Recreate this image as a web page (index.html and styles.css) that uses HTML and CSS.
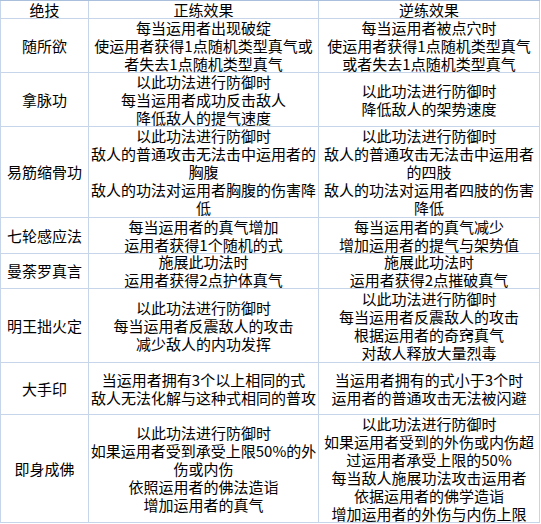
FILE: index.html
```html
<!DOCTYPE html>
<html lang="zh">
<head>
<meta charset="utf-8">
<title>绝技</title>
<link rel="stylesheet" href="styles.css">
</head>
<body>
<div class="table">
  <div class="cell head">绝技</div>
  <div class="cell head">正练效果</div>
  <div class="cell head">逆练效果</div>

  <div class="cell name">随所欲</div>
  <div class="cell">每当运用者出现破绽<br>使运用者获得1点随机类型真气或<br>者失去1点随机类型真气</div>
  <div class="cell">每当运用者被点穴时<br>使运用者获得1点随机类型真气<br>或者失去1点随机类型真气</div>

  <div class="cell name">拿脉功</div>
  <div class="cell">以此功法进行防御时<br>每当运用者成功反击敌人<br>降低敌人的提气速度</div>
  <div class="cell">以此功法进行防御时<br>降低敌人的架势速度</div>

  <div class="cell name">易筋缩骨功</div>
  <div class="cell">以此功法进行防御时<br>敌人的普通攻击无法击中运用者的<br>胸腹<br>敌人的功法对运用者胸腹的伤害降<br>低</div>
  <div class="cell">以此功法进行防御时<br>敌人的普通攻击无法击中运用者<br>的四肢<br>敌人的功法对运用者四肢的伤害<br>降低</div>

  <div class="cell name">七轮感应法</div>
  <div class="cell">每当运用者的真气增加<br>运用者获得1个随机的式</div>
  <div class="cell">每当运用者的真气减少<br>增加运用者的提气与架势值</div>

  <div class="cell name">曼荼罗真言</div>
  <div class="cell">施展此功法时<br>运用者获得2点护体真气</div>
  <div class="cell">施展此功法时<br>运用者获得2点摧破真气</div>

  <div class="cell name">明王拙火定</div>
  <div class="cell">以此功法进行防御时<br>每当运用者反震敌人的攻击<br>减少敌人的内功发挥</div>
  <div class="cell">以此功法进行防御时<br>每当运用者反震敌人的攻击<br>根据运用者的奇窍真气<br>对敌人释放大量烈毒</div>

  <div class="cell name">大手印</div>
  <div class="cell">当运用者拥有3个以上相同的式<br>敌人无法化解与这种式相同的普攻</div>
  <div class="cell">当运用者拥有的式小于3个时<br>运用者的普通攻击无法被闪避</div>

  <div class="cell name">即身成佛</div>
  <div class="cell">以此功法进行防御时<br>如果运用者受到承受上限50%的外<br>伤或内伤<br>依照运用者的佛法造诣<br>增加运用者的真气</div>
  <div class="cell">以此功法进行防御时<br>如果运用者受到的外伤或内伤超<br>过运用者承受上限的50%<br>每当敌人施展功法攻击运用者<br>依据运用者的佛学造诣<br>增加运用者的外伤与内伤上限</div>
</div>
</body>
</html>
```

FILE: styles.css
```css
html, body {
  margin: 0;
  padding: 0;
  background: #ffffff;
}

.table {
  display: grid;
  grid-template-columns: 87px 229px 220px;
  grid-template-rows: 17px 53px 53px 90px 35px 34px 73px 51px 107px;
  gap: 1px;
  padding: 0 1px 1px 1px;
  border-top: 1px solid #aabfdc;
  width: 538px;
  background: #c7d5ea;
  font-family: "Noto Sans CJK SC", "Noto Sans", sans-serif;
  font-size: 15px;
  line-height: 18px;
  color: #000000;
}

.cell {
  background: #ffffff;
  display: flex;
  align-items: center;
  justify-content: center;
  text-align: center;
  white-space: nowrap;
}

.head {
  line-height: 17px;
}
```
